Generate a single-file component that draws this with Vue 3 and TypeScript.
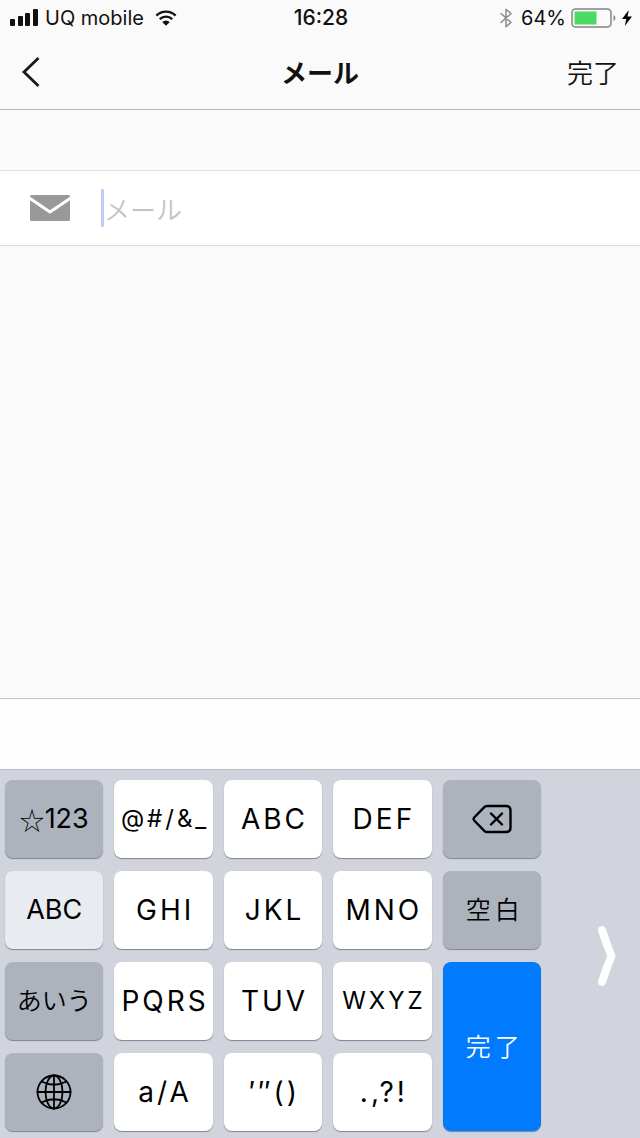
<script setup lang="ts">
import { ref } from 'vue'

type KeyTone = 'light' | 'dark' | 'active' | 'primary'

interface Key {
  id: string
  label: string
  tone: KeyTone
  style?: 'spaced' | 'compact' | 'mark' | 'kana'
  icon?: 'delete' | 'globe'
  symbol?: string
}

const mail = ref('')

const keys: Key[] = [
  { id: 'num', symbol: '☆', label: '123', tone: 'dark' },
  { id: 'sym', label: '@#/&_', tone: 'light', style: 'compact' },
  { id: 'abc', label: 'ABC', tone: 'light', style: 'spaced' },
  { id: 'def', label: 'DEF', tone: 'light', style: 'spaced' },
  { id: 'del', label: '削除', tone: 'dark', icon: 'delete' },
  { id: 'latin', label: 'ABC', tone: 'active' },
  { id: 'ghi', label: 'GHI', tone: 'light', style: 'spaced' },
  { id: 'jkl', label: 'JKL', tone: 'light', style: 'spaced' },
  { id: 'mno', label: 'MNO', tone: 'light', style: 'spaced' },
  { id: 'space', label: '空白', tone: 'dark', style: 'mark' },
  { id: 'kana', label: 'あいう', tone: 'dark', style: 'kana' },
  { id: 'pqrs', label: 'PQRS', tone: 'light', style: 'spaced' },
  { id: 'tuv', label: 'TUV', tone: 'light', style: 'spaced' },
  { id: 'wxyz', label: 'WXYZ', tone: 'light', style: 'compact' },
  { id: 'done', label: '完了', tone: 'primary', style: 'mark' },
  { id: 'globe', label: '次のキーボード', tone: 'dark', icon: 'globe' },
  { id: 'case', label: 'a/A', tone: 'light', style: 'spaced' },
  { id: 'quote', label: '′″()', tone: 'light', style: 'spaced' },
  { id: 'punct', label: '.,?!', tone: 'light', style: 'spaced' },
]
</script>

<template>
  <div class="screen">
    <div class="status">
      <div class="status-side">
        <svg class="signal" viewBox="0 0 28 17" aria-hidden="true">
          <rect x="0" y="10" width="5" height="7" rx="1" />
          <rect x="8" y="7" width="5" height="10" rx="1" />
          <rect x="15" y="4" width="5" height="13" rx="1" />
          <rect x="23" y="0" width="5" height="17" rx="1" />
        </svg>
        <span>UQ mobile</span>
        <svg class="wifi" viewBox="0 0 22 16" aria-hidden="true">
          <path d="M1.4 5.6a13.6 13.6 0 0 1 19.2 0M4.8 9.2a8.8 8.8 0 0 1 12.4 0" />
          <path class="solid" d="M7.2 12Q11 8.8 14.8 12L11 15.8Z" />
        </svg>
      </div>
      <time class="clock">16:28</time>
      <div class="status-side right">
        <svg class="bluetooth" viewBox="0 0 12 20" aria-hidden="true">
          <path d="M1 5.5 11 14.5 6 18.8V1.2L11 5.5 1 14.5" />
        </svg>
        <span>64%</span>
        <svg class="battery" viewBox="0 0 46 20" aria-hidden="true">
          <rect class="shell" x="1" y="1" width="39" height="18" rx="3.5" />
          <rect class="charge" x="3.5" y="3.5" width="22" height="13" />
          <path class="cap" d="M42.5 7v6q2-1 2-3t-2-3Z" />
        </svg>
        <svg class="bolt" viewBox="0 0 10 16" aria-hidden="true">
          <path d="M6.8 0 0 9h4.3L2.8 16 10 6.6H5.6Z" />
        </svg>
      </div>
    </div>

    <header class="nav">
      <button class="back" type="button" aria-label="戻る">
        <svg viewBox="0 0 20 32" aria-hidden="true"><path d="M17.5 2 3 16l14.5 14" /></svg>
      </button>
      <h1>メール</h1>
      <button class="done" type="button">完了</button>
    </header>

    <main class="content">
      <div class="field">
        <label for="mail" aria-label="メール">
          <svg viewBox="0 0 40 26" aria-hidden="true">
            <rect width="40" height="26" rx="1.5" />
            <path d="M0 3.5 20 17 40 3.5" />
          </svg>
        </label>
        <span class="caret"></span>
        <input id="mail" v-model="mail" type="email" placeholder="メール" />
      </div>
    </main>

    <div class="suggestions"></div>

    <div class="keyboard">
      <button
        v-for="key in keys"
        :key="key.id"
        type="button"
        class="key"
        :class="[key.tone, key.style]"
        :aria-label="key.icon ? key.label : undefined"
      >
        <svg v-if="key.icon === 'delete'" class="delete" viewBox="0 0 40 30" aria-hidden="true">
          <path d="M15 2H34Q38.5 2 38.5 6.5V23.5Q38.5 28 34 28H15Q13.5 28 12.3 26.8L2.2 16.5Q1 15 2.2 13.5L12.3 3.2Q13.5 2 15 2Z" />
          <path d="m19 9.5 11 11m0-11-11 11" />
        </svg>
        <svg v-else-if="key.icon === 'globe'" class="globe" viewBox="0 0 36 36" aria-hidden="true">
          <circle cx="18" cy="18" r="16.5" />
          <ellipse cx="18" cy="18" rx="8.5" ry="16.5" />
          <path d="M18 1.5v33M1.5 18h33M5.5 7.5Q18 14 30.5 7.5M5.5 28.5Q18 22 30.5 28.5" />
        </svg>
        <template v-else><span v-if="key.symbol" class="symbol">{{ key.symbol }}</span>{{ key.label }}</template>
      </button>
      <button class="shift-side" type="button" aria-label="キーボードを右に寄せる">
        <svg viewBox="0 0 20 62" aria-hidden="true"><path d="M5 5Q9 18 14.5 31 9 44 5 57" /></svg>
      </button>
    </div>
  </div>
</template>

<style>
body {
  background: #fafafa;
}
</style>

<style scoped>
.screen {
  display: flex;
  flex-direction: column;
  min-height: 100vh;
  background: #fafafa;
  color: #111;
  font-family: Inter, 'Noto Sans CJK JP', sans-serif;
}

button,
input {
  margin: 0;
  padding: 0;
  border: 0;
  background: none;
  color: inherit;
  font: inherit;
}

svg {
  display: block;
  flex: none;
  fill: none;
  stroke-linecap: round;
  stroke-linejoin: round;
}

.status {
  display: grid;
  grid-template-columns: 1fr auto 1fr;
  align-items: center;
  height: 35px;
  padding: 0 8px 0 10px;
  font-size: 20px;
  line-height: 24px;
}

.status-side {
  display: flex;
  align-items: center;
  gap: 7px;
}

.status-side.right {
  justify-content: flex-end;
  gap: 5px;
}

.clock {
  font-size: 21px;
  font-weight: 500;
}

.signal {
  width: 28px;
  height: 17px;
  fill: #111;
}

.wifi {
  width: 22px;
  height: 16px;
  margin-left: 4px;
  stroke: #111;
  stroke-width: 2.4;
  stroke-linecap: butt;
}

.wifi .solid {
  fill: #111;
  stroke: none;
}

.bluetooth {
  width: 12px;
  height: 20px;
  margin-right: 4px;
  stroke: #8c8c8c;
  stroke-width: 1.5;
}

.battery {
  width: 46px;
  height: 20px;
}

.shell {
  stroke: #858585;
  stroke-width: 1.5;
}

.charge {
  fill: #4cd964;
}

.cap {
  fill: #858585;
}

.bolt {
  width: 10px;
  height: 16px;
  fill: #000;
}

.nav {
  display: grid;
  grid-template-columns: 1fr auto 1fr;
  align-items: center;
  height: 74px;
  padding: 0 21px;
  border-bottom: 1px solid #b9b9b9;
  font-family: 'Noto Sans CJK JP', sans-serif;
  font-size: 26px;
  line-height: 40px;
}

.nav h1 {
  margin: 0;
  font-size: 26px;
  font-weight: 700;
}

.back {
  justify-self: start;
}

.back svg {
  width: 20px;
  height: 32px;
  stroke: #1a1a1a;
  stroke-width: 2.8;
  stroke-linecap: butt;
  stroke-linejoin: miter;
}

.done {
  justify-self: end;
  font-weight: 350;
}

.content {
  flex: 1;
  padding-top: 60px;
}

.field {
  display: flex;
  align-items: center;
  height: 74px;
  padding: 0 30px;
  border-top: 1px solid #e2e2e2;
  border-bottom: 1px solid #dcdcdc;
  background: #fff;
}

.field label {
  margin-right: 31px;
}

.field svg {
  width: 40px;
  height: 26px;
  fill: #999;
}

.field path {
  fill: none;
  stroke: #fff;
  stroke-width: 3;
}

.caret {
  width: 3px;
  height: 38px;
  border-radius: 1px;
  background: #becbf5;
}

.field input {
  flex: 1;
  min-width: 0;
  height: 40px;
  outline: none;
  font-family: 'Noto Sans CJK JP', sans-serif;
  font-size: 26px;
  font-weight: 350;
}

.field input::placeholder {
  color: #c4c4c8;
  opacity: 1;
}

.suggestions {
  height: 70px;
  border-top: 1px solid #c4c6c9;
  background: #fdfdfe;
}

.keyboard {
  display: grid;
  grid-template-columns: repeat(5, minmax(0, 1fr)) 88px;
  grid-template-rows: repeat(4, 78px);
  gap: 13px 11px;
  padding: 10px 0 7px 5px;
  border-top: 1px solid #b8bbc2;
  background: #d1d4dc;
  color: #000;
}

.key {
  display: flex;
  align-items: center;
  justify-content: center;
  border-radius: 8px;
  background: #fff;
  box-shadow: 0 1px 1px #7f838a;
  font-size: 27px;
  line-height: 40px;
  white-space: nowrap;
}

.key.dark {
  background: #acb3bd;
}

.key.active {
  background: #e8ebf0;
}

.key.primary {
  grid-row: span 2;
  background: #007aff;
  color: #fff;
}

.key.spaced {
  padding-left: 3px;
  font-size: 28px;
  letter-spacing: 3px;
}

.key.compact {
  padding-left: 3px;
  font-size: 24px;
  letter-spacing: 3px;
}

.key.mark {
  padding-left: 6px;
  font-size: 25px;
  font-weight: 350;
  letter-spacing: 4px;
}

.key.kana {
  font-size: 25px;
  font-weight: 350;
}

.symbol {
  font-family: 'Noto Sans CJK JP', sans-serif;
  font-size: 25px;
  font-weight: 300;
}

.delete {
  width: 40px;
  height: 30px;
  stroke: #000;
  stroke-width: 2.4;
}

.globe {
  width: 36px;
  height: 36px;
  stroke: #000;
  stroke-width: 1.8;
}

.shift-side {
  display: flex;
  grid-column: 6;
  grid-row: 1 / span 4;
  align-items: center;
  justify-content: flex-end;
  padding-right: 23px;
}

.shift-side svg {
  width: 20px;
  height: 62px;
  stroke: #fff;
  stroke-width: 8;
}
</style>
